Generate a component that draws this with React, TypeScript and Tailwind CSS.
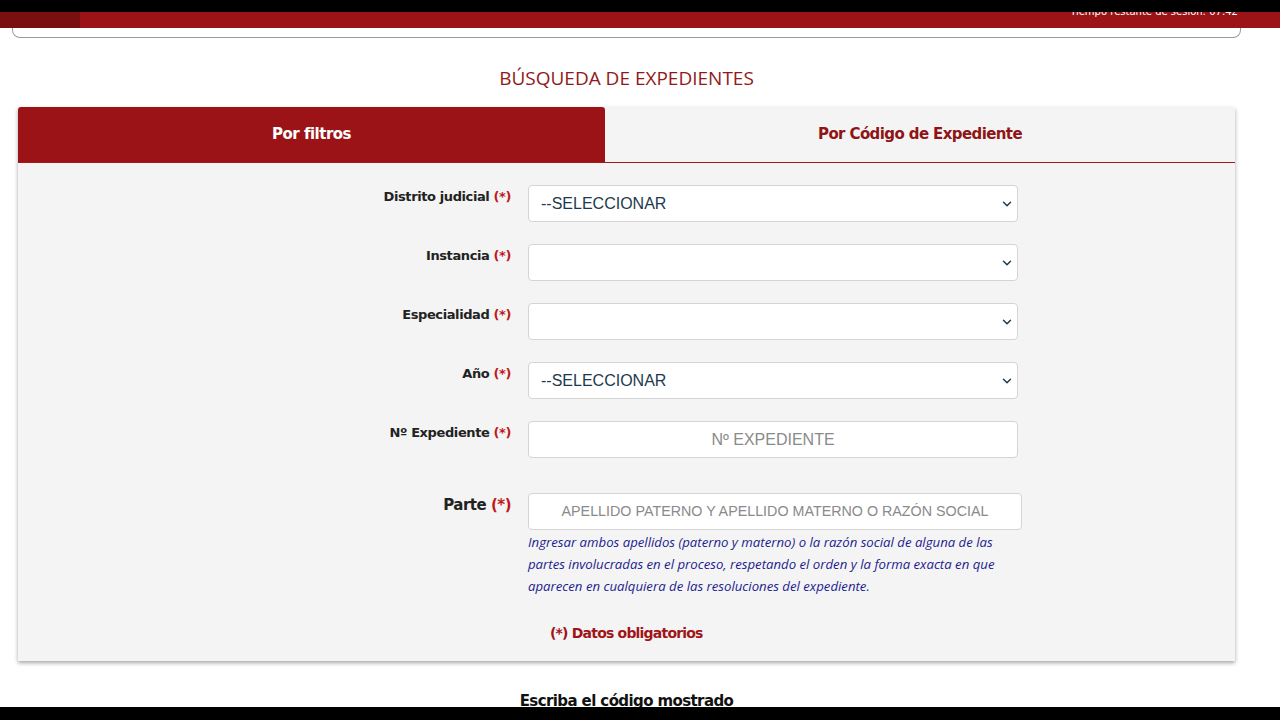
import React from 'react';
import { ChevronDown } from 'lucide-react';

const font = { fontFamily: '"DejaVu Sans", Verdana, sans-serif' };

function Req() {
  return <span className="text-[#c0181b]"> (*)</span>;
}

function SelectBox({ value }: { value?: string }) {
  return (
    <div className="flex h-[37px] w-[490px] items-center justify-between rounded-[4px] border border-[#d4d4d4] bg-white pl-3 pr-[3px]">
      <span className="text-[16px] text-[#1d3a4c]" style={{ fontFamily: '"Liberation Sans", Arial, sans-serif' }}>
        {value}
      </span>
      <ChevronDown className="h-[14px] w-[14px] text-[#1d3a4c]" strokeWidth={2.5} />
    </div>
  );
}

function Row({ label, children }: { label: string; children: React.ReactNode }) {
  return (
    <div className="flex items-start">
      <div className="w-[510px] pt-[2px] pr-[17px] text-right text-[13px] font-bold tracking-[-0.4px] text-[#222]">
        {label}
        <Req />
      </div>
      {children}
    </div>
  );
}

export default function App() {
  return (
    <div className="relative h-[720px] w-[1280px] overflow-hidden bg-white" style={font}>
      {/* letterbox bars */}
      <div className="relative z-10 h-[12px] bg-black" />
      <div className="flex h-[16px] bg-[#9b1316]">
        <div className="w-[80px] bg-[#7a0f10]" />
        <div className="flex-1" />
        <div className="-mt-[5px] pr-[42px] text-[10px] leading-[10px] text-white">Tiempo restante de sesión: 07:42</div>
      </div>

      <div className="w-[1253px]">
        <div className="mx-[12px] h-[10px] rounded-b-[8px] border border-t-0 border-[#9a9a9a]" />

        <h1
          className="mt-[28px] text-center text-[19px] leading-[24px] text-[#8f1a1a]"
          style={{ fontFamily: '"Open Sans", sans-serif' }}
        >
          BÚSQUEDA DE EXPEDIENTES
        </h1>

        <div className="mx-[18px] mt-[17px] w-[1217px] bg-[#f4f4f4] shadow-[0_2px_4px_rgba(0,0,0,0.35)]">
          <div className="flex h-[56px] border-b border-[#a01c1c]">
            <div className="flex w-[587px] items-center justify-center rounded-t-[3px] bg-[#9b1316] text-[15px] font-bold tracking-[-0.5px] text-white">
              Por filtros
            </div>
            <div className="flex flex-1 items-center justify-center text-[15px] font-bold tracking-[-0.6px] text-[#8f1416]">
              Por Código de Expediente
            </div>
          </div>

          <div className="flex flex-col gap-[22px] pt-[22px]">
            <Row label="Distrito judicial">
              <SelectBox value="--SELECCIONAR" />
            </Row>
            <Row label="Instancia">
              <SelectBox />
            </Row>
            <Row label="Especialidad">
              <SelectBox />
            </Row>
            <Row label="Año">
              <SelectBox value="--SELECCIONAR" />
            </Row>
            <Row label="Nº Expediente">
              <div
                className="flex h-[37px] w-[490px] items-center justify-center rounded-[4px] border border-[#d4d4d4] bg-white text-[16px] text-[#8a8a8a]"
                style={{ fontFamily: '"Liberation Sans", Arial, sans-serif' }}
              >
                Nº EXPEDIENTE
              </div>
            </Row>
          </div>

          <div className="mt-[35px] flex items-start">
            <div className="w-[510px] pt-[1px] pr-[17px] text-right text-[15px] font-bold tracking-[-0.5px] text-[#222]">
              Parte
              <Req />
            </div>
            <div className="w-[494px]">
              <div
                className="flex h-[37px] items-center justify-center rounded-[4px] border border-[#d4d4d4] bg-white text-[14.3px] text-[#8a8a8a]"
                style={{ fontFamily: '"Liberation Sans", Arial, sans-serif' }}
              >
                APELLIDO PATERNO Y APELLIDO MATERNO O RAZÓN SOCIAL
              </div>
              <p
                className="mt-[1px] pr-[14px] text-[13.2px] italic leading-[22px] text-[#1c1c8f]"
                style={{ fontFamily: '"Open Sans", sans-serif' }}
              >
                Ingresar ambos apellidos (paterno y materno) o la razón social de alguna de las partes involucradas en
                el proceso, respetando el orden y la forma exacta en que aparecen en cualquiera de las resoluciones del
                expediente.
              </p>
            </div>
          </div>

          <div className="pb-[17px] pt-[26px] pl-[532px] text-[14px] font-bold tracking-[-0.8px] text-[#a01418]">
            (*) Datos obligatorios
          </div>
        </div>

        <div className="mt-[29px] text-center text-[15px] font-bold tracking-[-0.6px] text-[#111]">
          Escriba el código mostrado
        </div>
      </div>

      <div className="absolute bottom-0 left-0 h-[13px] w-full bg-black" />
    </div>
  );
}
